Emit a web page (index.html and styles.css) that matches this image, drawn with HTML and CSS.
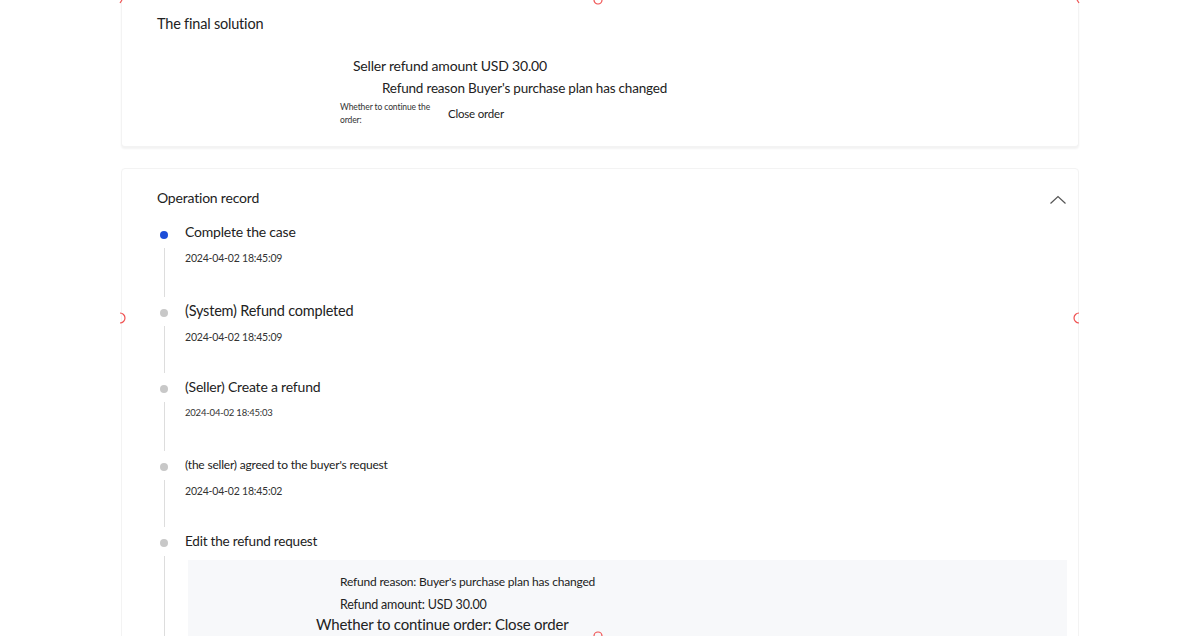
FILE: index.html
```html
<!DOCTYPE html>
<html>
<head>
<meta charset="utf-8">
<link rel="stylesheet" href="styles.css">
</head>
<body>
<div class="page">
  <section class="card card-solution">
    <h2 class="card-title">The final solution</h2>
    <div class="solution">
      <div class="sol-amount">Seller refund amount USD 30.00</div>
      <div class="sol-reason">Refund reason Buyer's purchase plan has changed</div>
      <div class="sol-continue">
        <span class="sol-label">Whether to continue the order:</span>
        <span class="sol-value">Close order</span>
      </div>
    </div>
  </section>

  <section class="card card-record">
    <div class="record-head">
      <h2 class="card-title">Operation record</h2>
      <svg class="chevron" width="18" height="12" viewBox="0 0 18 12"><path d="M1.5 9.5 L9 2.5 L16.5 9.5" fill="none" stroke="#555" stroke-width="1.2"/></svg>
    </div>
    <ul class="timeline">
      <li class="tl-item gap-35">
        <div class="tl-rail"><span class="tl-dot active"></span><span class="tl-line"></span></div>
        <div class="tl-body">
          <div class="tl-title">Complete the case</div>
          <div class="tl-time">2024-04-02 18:45:09</div>
        </div>
      </li>
      <li class="tl-item gap-32">
        <div class="tl-rail"><span class="tl-dot"></span><span class="tl-line"></span></div>
        <div class="tl-body">
          <div class="tl-title wide">(System) Refund completed</div>
          <div class="tl-time">2024-04-02 18:45:09</div>
        </div>
      </li>
      <li class="tl-item gap-34">
        <div class="tl-rail"><span class="tl-dot"></span><span class="tl-line"></span></div>
        <div class="tl-body">
          <div class="tl-title">(Seller) Create a refund</div>
          <div class="tl-time small">2024-04-02 18:45:03</div>
        </div>
      </li>
      <li class="tl-item gap-32">
        <div class="tl-rail"><span class="tl-dot"></span><span class="tl-line"></span></div>
        <div class="tl-body">
          <div class="tl-title sm">(the seller) agreed to the buyer's request</div>
          <div class="tl-time">2024-04-02 18:45:02</div>
        </div>
      </li>
      <li class="tl-item gap-32">
        <div class="tl-rail"><span class="tl-dot"></span><span class="tl-line"></span></div>
        <div class="tl-body">
          <div class="tl-title md">Edit the refund request</div>
          <div class="detail">
            <div class="d-reason">Refund reason: Buyer's purchase plan has changed</div>
            <div class="d-amount">Refund amount: USD 30.00</div>
            <div class="d-continue">Whether to continue order: Close order</div>
          </div>
        </div>
      </li>
    </ul>
  </section>
</div>
<svg class="handles" width="1200" height="636" viewBox="0 0 1200 636">
  <g fill="none" stroke="#f05050" stroke-width="1.2">
    <path d="M120 3 L122 0"/>
    <path d="M594 0 A4 4 0 0 0 602 0"/>
    <path d="M1077 0 L1079 3"/>
    <path d="M120 313 A5 5 0 0 1 120 323"/>
    <path d="M1079 313 A5 5 0 0 0 1079 323"/>
    <path d="M594 636 A4 4 0 0 1 602 636"/>
  </g>
</svg>
</body>
</html>
```

FILE: styles.css
```css
html, body {
  margin: 0;
  padding: 0;
  background: #fff;
  height: 636px;
  overflow: hidden;
}
body {
  position: relative;
  font-family: Lato, "Noto Sans", sans-serif;
  color: #222;
  letter-spacing: -0.2px;
}
.page {
  width: 958px;
  margin: 0 auto;
  display: flex;
  flex-direction: column;
  gap: 21px;
}
.card {
  background: #fff;
  border: 1px solid #f3f3f3;
  border-radius: 4px;
}
.card-solution {
  border-top: none;
  border-radius: 0 0 4px 4px;
  box-shadow: 0 2px 2px rgba(0,0,0,0.05);
  padding: 14px 36px 19px 35px;
  height: 113px;
}
.card-title {
  margin: 0;
  font-size: 14px;
  font-weight: 400;
  line-height: 20px;
  color: #222;
}
.card-solution .card-title {
  font-size: 14.5px;
}
.solution {
  display: flex;
  flex-direction: column;
  margin-top: 22px;
}
.sol-amount {
  margin-left: 196px;
  font-size: 14px;
  line-height: 20px;
}
.sol-reason {
  margin-left: 225px;
  font-size: 13.5px;
  line-height: 20px;
  margin-top: 2px;
}
.sol-continue {
  margin-left: 183px;
  display: flex;
  align-items: center;
  margin-top: 3px;
}
.sol-label {
  width: 98px;
  font-size: 8.5px;
  line-height: 13px;
  color: #333;
  letter-spacing: -0.1px;
}
.sol-value {
  margin-left: 10px;
  font-size: 11.5px;
  line-height: 16px;
}
.card-record {
  padding: 19px 11px 0 35px;
}
.record-head {
  display: flex;
  justify-content: space-between;
  align-items: center;
}
.chevron {
  margin-top: 4px;
}
.timeline {
  list-style: none;
  margin: 14px 0 0 0;
  padding: 0;
}
.tl-item {
  display: flex;
}
.tl-rail {
  width: 26px;
  display: flex;
  flex-direction: column;
  align-items: flex-start;
  padding-left: 3px;
}
.tl-dot {
  width: 8px;
  height: 8px;
  border-radius: 50%;
  background: #c8c8c8;
  margin-top: 8px;
  flex: none;
}
.tl-dot.active {
  background: #1d4ed8;
  margin-top: 9px;
}
.tl-line {
  width: 1px;
  background: #dddddd;
  margin-left: 3.5px;
  margin-top: 9px;
  margin-bottom: 4px;
  flex: 1;
}
.tl-body {
  flex: 1;
  margin-left: -1px;
}
.gap-35 .tl-body { padding-bottom: 35px; }
.gap-34 .tl-body { padding-bottom: 34px; }
.gap-32 .tl-body { padding-bottom: 32px; }
.tl-title {
  font-size: 14px;
  line-height: 20px;
}
.tl-title.wide {
  font-size: 14.5px;
}
.tl-title.sm {
  font-size: 12px;
}
.tl-title.md {
  font-size: 13.5px;
}
.tl-time {
  margin-top: 8px;
  font-size: 10.5px;
  line-height: 16px;
  color: #333;
}
.tl-time.small {
  font-size: 9.5px;
}
.detail {
  margin-top: 9px;
  margin-left: 3px;
  background: #f7f8fa;
  height: 120px;
  padding-top: 12px;
}
.d-reason {
  margin-left: 152px;
  font-size: 12px;
  line-height: 20px;
}
.d-amount {
  margin-left: 152px;
  font-size: 12.5px;
  line-height: 20px;
  margin-top: 3px;
}
.d-continue {
  margin-left: 128px;
  font-size: 15px;
  line-height: 18px;
}
.handles {
  position: absolute;
  left: 0;
  top: 0;
  pointer-events: none;
}
```
